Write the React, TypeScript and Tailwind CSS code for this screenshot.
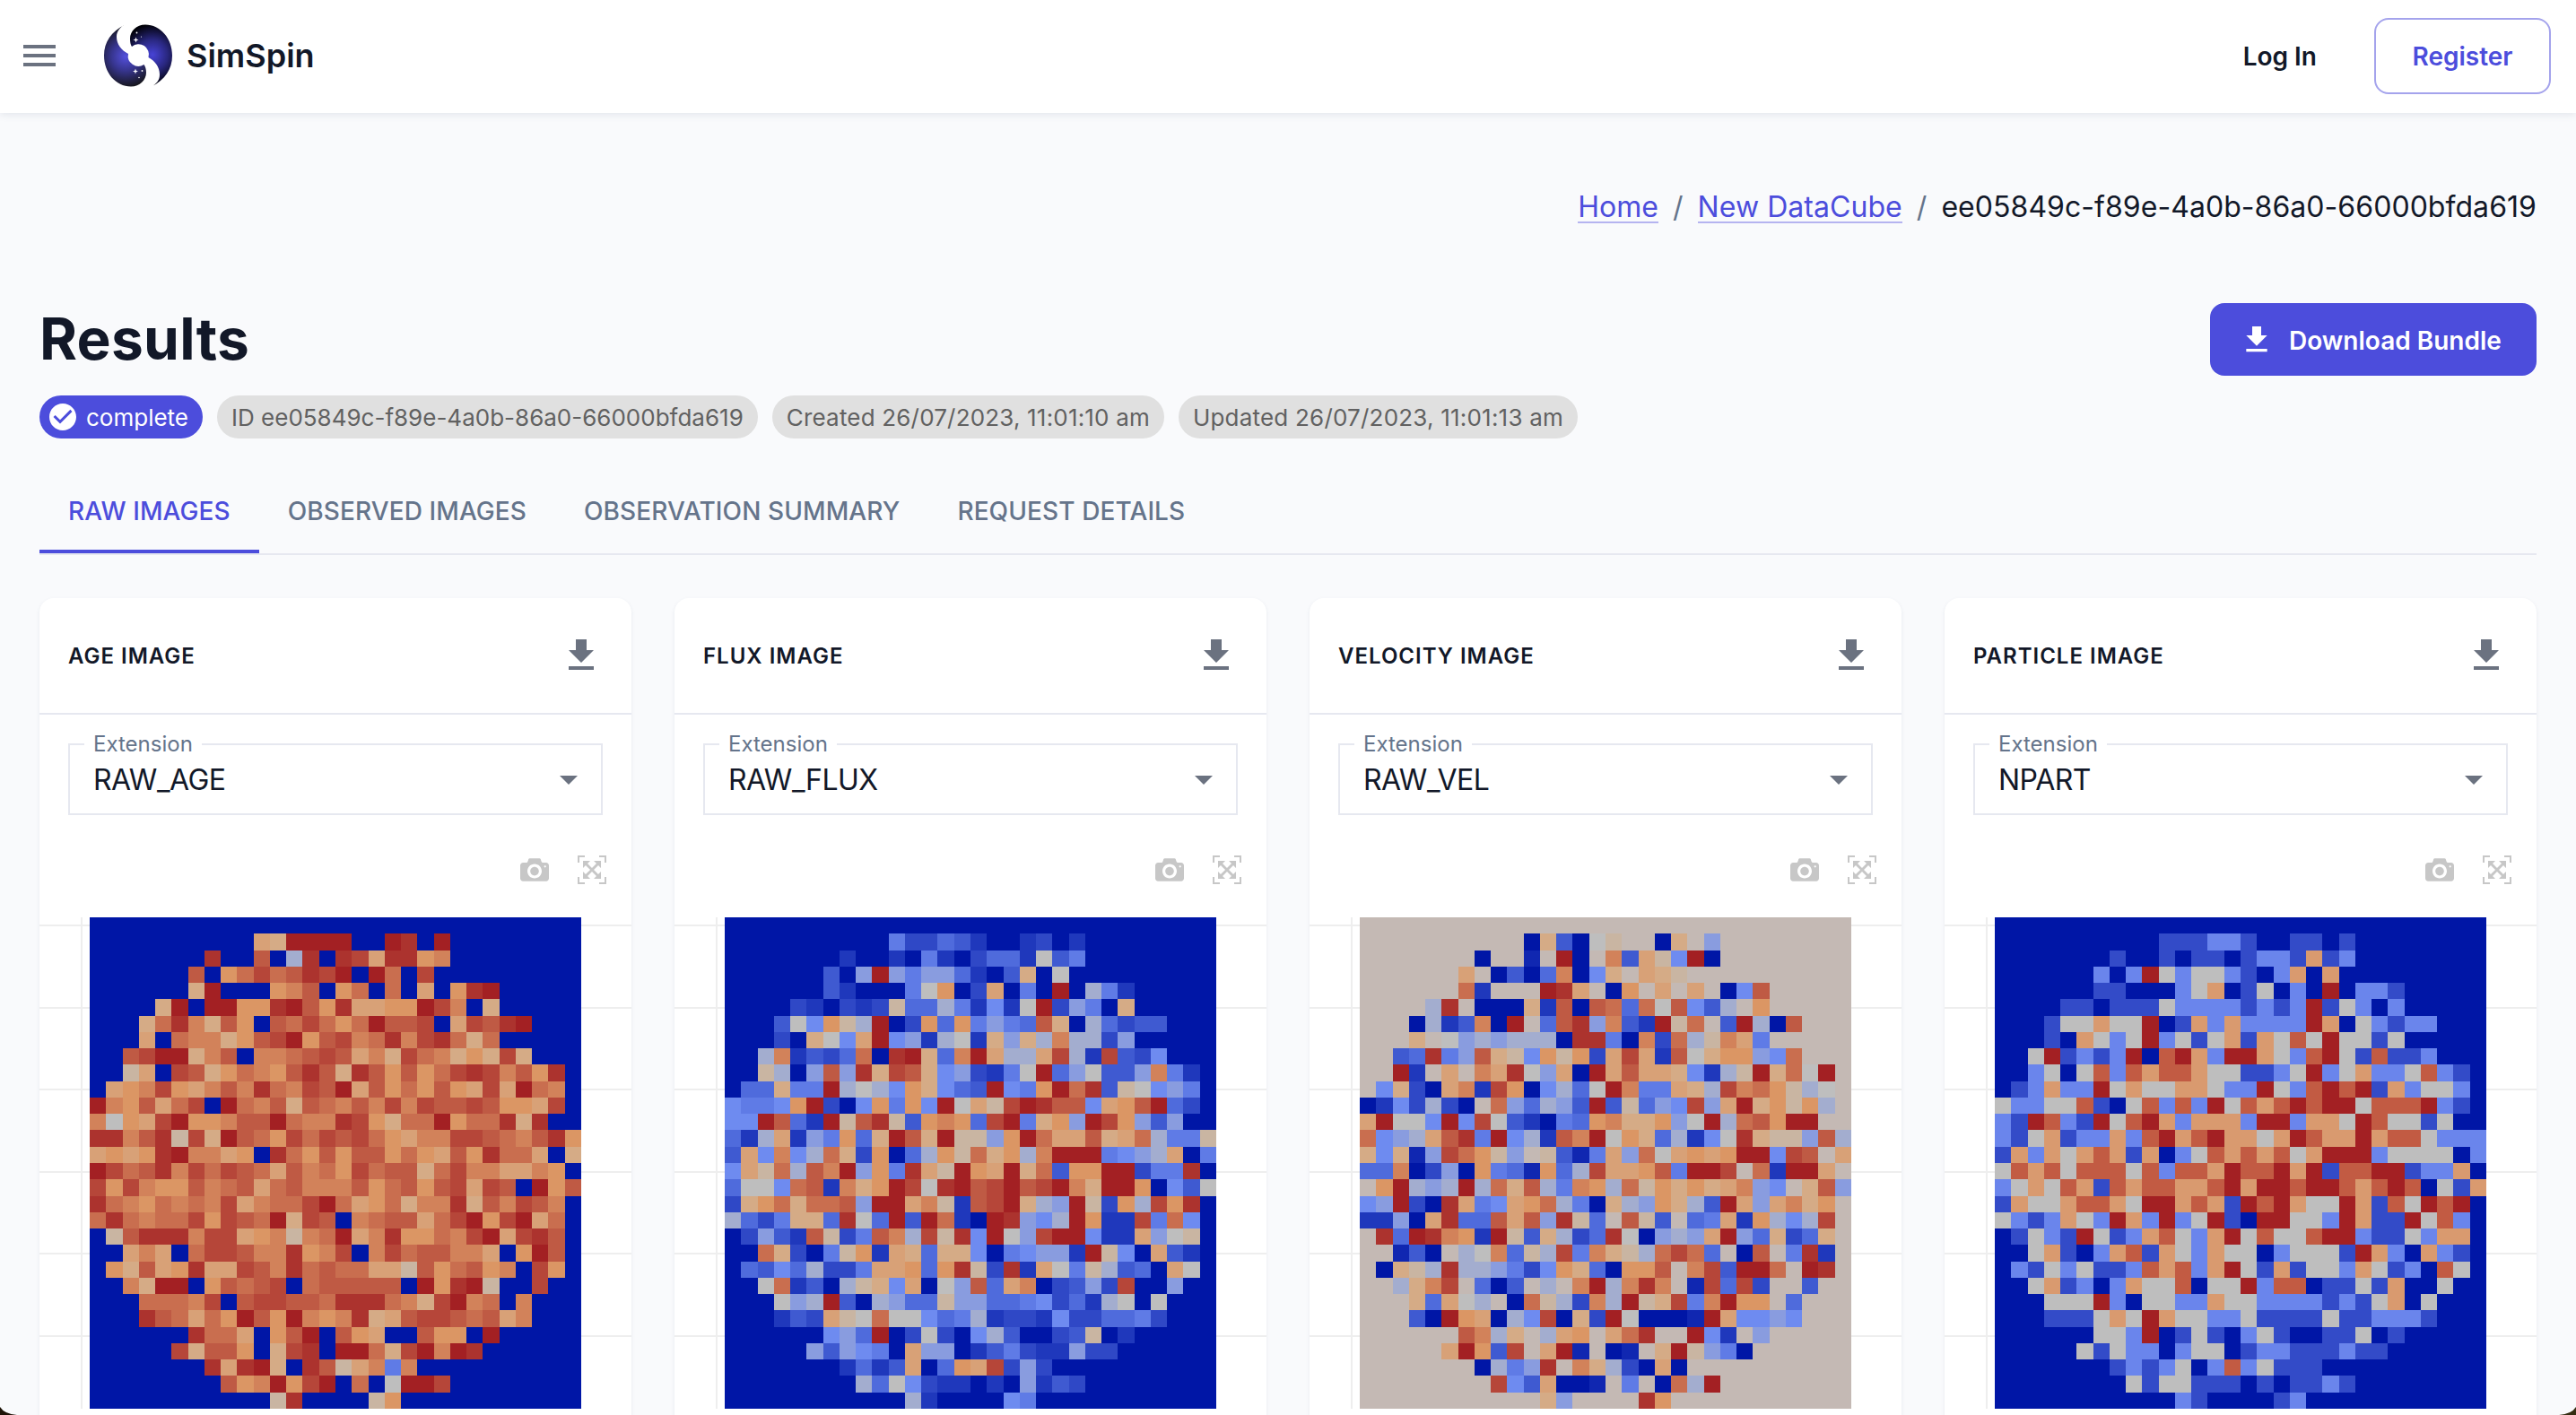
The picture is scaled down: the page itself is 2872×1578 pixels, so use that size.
import React from "react";

const RAMP = [
  "#0016a6", "#1027b1", "#1f38bc", "#2f48c6", "#3f5ad1", "#4f6bdc", "#5f7be6",
  "#6e8bf0", "#899cdf", "#a3adcf", "#bebebe", "#c9b5a2", "#d5ab86", "#d8a177",
  "#db9664", "#d2825a", "#c96e4f", "#bf5a44", "#b64639", "#ac332e", "#a32023",
];
const COUNTS = ["#0016a6", "#334bc8", "#6a85ec", "#bebebe", "#d99a6f", "#c25b43", "#a32023"];

const E = "..............................";
const AGE = [
  E, "..........NMUUUU..UT.U........", ".......T..R.JT.TSNTTOP........", "......R.OQSQRTSU.UQ.S.........",
  "......MU...OPR.OQ.Q.N.OTU.....", "....MU.UUOOTUROTNNOOUSP.M.....", "...MQTPMRO.RQSQOQURRS.NSRTU...",
  "...N.QPPMORSUORSPQTPSTQMQ.....", "..RSUUMPR.PPQRSRNPMSQPMOMSM...", "..LN.SRMOQPORTRMTROROQSTSPROT.",
  ".NOPSONPRPTQPSRUNROQORONSNUQP.", "UPORNQS.UQPRMRQPRPSPSRRSROONS.", "PKONSUOOPRRUQPPTSOMQQUOQQTMT..",
  "TTPRTLSMURQOSQSRSQONPPSSRQPRTO", "NONOTUPPNO.TQORORROQONROTQQN.M", "USQRTPSQSRQNRPQOSQRRMQSPPNNPO.",
  "SOSPOORPQRNQRPPPROQRORSNSR.UOR", "TQPOQPQPSNPQQSUQNOQMPPTMRPSRP.", "QTQPQQSOSRQUMSR.PQRRNQSUOSUNQ.",
  ".LRTTTPSSNOPLPQUNPTOOQPSUNSTR.", "..NPN.QSSRPPTOPS.PSQRRPPN.OUR.", ".OMRNOTNNSRPTQRQQNNLROQROP.SO.",
  "..PMUU.ORQRS.QRRRRR.UOTUL..S..", "...QQQPS.RSSRRQTTTQPMSUPQ.P...", "...TRQNQOUROUPOPTMNRSSRQRNP...",
  "......TQQN.ORU.RON..ROO.U.....", ".....SMRRO.MST.UUQMSUPUT......", ".......TNTUM.TRLNPGP..........",
  "........ROPUOSU.Q.KUUS........", "...........LT....LO...........",
];
const FLUX = [
  E, "..........GDDFEC..CD.C........", ".......C..C.GC.DFFCKEG........", "......E.IUIGIIFC.EM.K.........",
  "......EC...GKO.DN.G.U.JGC.....", "....DC.DCDLFFJGCHCKUDIG.M.....", "...EKHOLJU.DOFOGIGFRM.JFDEE...",
  "...D.MKHNUHICJKCMIMJPJJDI.....", "..JPCEDFQ.TUMFPUNJJNSJCSEDH...", "..LJ.IRITMSRMHIDCGKUFIKEEIPGC.",
  ".FFMGGUJKJHOMHFEUHGOUQTELKHIG.", "HGGHOUD.HOGOHUKNLSUTRRHNORUFD.", "HHURFCULRTLEOPOFSUGMOIUSOIEI..",
  "FCJNCIGOFMURMULLIOUQNNRMNQJGGL", "ENHPHJQMDO.FJOLQMOJPUUUGHIJN.G", "HNLQJRPUIOGTNLUONUMQEOOUUDGGT.",
  "FKKHQRCPMOUSKTURSURSUPMUUO.HEK", "DMOQMQQRIUUNPLCRSUMJIULDOJSOT.", "JFDGMMFTKFUEUQC.UTIHJUOCCSGQH.",
  ".DIECRLDGRPJSLTHUKISUUHCCNIKL.", "..QMD.GLOCNMFMMH.GHIICULH.NEC.", ".FEHFJDDGNNOFOTLDTCNKGLJEF.NK.",
  "..KQCE.JLMHN.KIRFNP.DEIDS..I..", "...KIJUE.JIFFLIIFFGHDFCJK.K...", "...CEDNLKQKKHFGJCDDCHDDFFGD...",
  "......HIFU.DKD.HJE..DEL.C.....", ".....IEIHG.NII.CEGDCCIDD......", ".......CFCEN.FONSDID..........",
  "........JFKHDCC.C.ICED........", "...........JC....HG...........",
];
const VELOCITY = [
  E, "..........AMEAKL..AM.I........", ".......A..B.UA.PENLHUA........", "......N.AEAFPAHM.NML..........",
  "......QC...UTN.AO.N.N.AHR.....", "....JT.AAAMCRARQFQKRHEJ.O.....", "...AJCEPAU.FRTIPECULQ.EUJAR...",
  "...M.KIJIJJJATTGAPDQJLPNG.....", "..EFTGIRMLHOLODNSNCRKMOOIHQ...", "..UC.N.PNTKINAUNRNNMHCJLUMQKU.",
  ".HMDANPCSOAHJFKUPGGNMJSPQOLJK.", "ACHDJDA.QIFJIEUELFIHSINUMOLOJ.", "NUKKHUHSKECAGFOPMMOIKUJQROUU..",
  "QHIJNRTGUHJCRPUKOMFJCHKTMLLIRJ", "MHMBISQOLI.LEBGNIQKNONOUUHSR.N", "FFPADIAOGFBOFJSNNORGUUS.QCUUN.",
  ".OUJIJUJQMRJGPOJQLOMOMNPIH.MRI", "HIUDATNGHNOQJGAMJIOMJEUNINPMO.", "CCIANTFFRNRITLF.RLE.FGNCOJHJS.",
  ".TFUTPOCULEMJDFTKAIJINUIFMDFM.", "..BEA.JKPFLJSGPMLJQSQF.AR.GTC.", ".AMLJTJJIGDHOMFAOOR.PSEUUQ.UT.",
  "..JMPS.FAE.J.PUJPTP.BSFSD..E..", "...MFNKJ.AQLJDPJULMSGPUOO.F...", "...EAUONAJHSAMDUKAAABUNHHIH...",
  "......RPJM.JNO.NQT..UHC.I.....", ".....NUOES.NUB.AB.MULIGA......", ".......AJGIT.PMJDANA..........",
  "........SHENAAB.G.AQJU........", "...........MI....TO...........",
];
const Z = "000000000000000000000000000000";
const PARTICLES = [
  Z, "000000000011122100110100000000", "000000010010110122141200000000", "000000202632332102404000000000",
  "000000110002340130206022100000", "000011011132222121261320200000", "000133433601424222264032122000",
  "000104323623134143536331300000", "003612126056426643256315112000", "002303525455433112362342235210",
  "012422634334432263256561423320", "322335103525263545656635556210", "216521635642444266244365331300",
  "213412242564564434654464553222", "142434541402354545346662333302", "354535553525546556461556612240",
  "234354154554456466566545650314", "143345543664541656433641536560", "321243264262361066332641163520",
  "013216312453246353356621132440", "003410245143243302333164204210", "021323112545246314133243120530",
  "003412024335033625501131400300", "000333620332243322221213403000", "000111343643322311113112221000",
  "000000332601310231001130100000", "000003132202330122111211000000", "000000012123025231110000000000",
  "000000003133111010112100000000", "000000000002100001200000000000",
];

const SIZE = 548;
const edge = (i: number) => Math.round((i * SIZE) / 30);

function cellColor(ch: string) {
  return ch >= "0" && ch <= "9" ? COUNTS[Number(ch)] : RAMP[ch.charCodeAt(0) - 65];
}

function Heatmap({ rows, background }: { rows: string[]; background: string }) {
  return (
    <svg width={SIZE} height={SIZE} viewBox={`0 0 ${SIZE} ${SIZE}`} shapeRendering="crispEdges" className="block">
      <rect width={SIZE} height={SIZE} fill={background} />
      {rows.map((row, y) =>
        [...row].map((ch, x) =>
          ch === "." || ch === "0" ? null : (
            <rect key={`${x}-${y}`} x={edge(x)} y={edge(y)} width={edge(x + 1) - edge(x)} height={edge(y + 1) - edge(y)} fill={cellColor(ch)} />
          ),
        ),
      )}
    </svg>
  );
}

function DownloadIcon({ className }: { className: string }) {
  return (
    <svg viewBox="0 0 24 24" className={className} fill="currentColor">
      <path d="M19 9h-4V3H9v6H5l7 7 7-7zM5 18v2h14v-2H5z" />
    </svg>
  );
}

function Logo() {
  return (
    <svg viewBox="0 0 76 70" className="h-[70px] w-[76px]">
      <defs>
        <radialGradient id="left" gradientUnits="userSpaceOnUse" cx="24" cy="36" r="35">
          <stop offset="0" stopColor="#5450dc" />
          <stop offset="0.45" stopColor="#37358f" />
          <stop offset="1" stopColor="#141417" />
        </radialGradient>
        <radialGradient id="right" gradientUnits="userSpaceOnUse" cx="54" cy="34" r="34">
          <stop offset="0" stopColor="#4743d6" />
          <stop offset="0.5" stopColor="#29277f" />
          <stop offset="1" stopColor="#000006" />
        </radialGradient>
      </defs>
      <path fill="url(#left)" d="M23.500 0.500C8 8 0 20 0 35C0 54 13 69.500 30 69.500C40 69.500 47 62 47 54C47 50 46 47 44.500 45A11.500 11.500 0 0 1 27 33C19 29 14 22 14 14C14 8 18 3 23.500 0.500Z" />
      <path fill="url(#right)" d="M53 69.500C68 62 76 50 76 35C76 16 63 0.500 46 0.500C36 0.500 29 8 29 16C29 20 29.500 23 31 25A11.500 11.500 0 0 1 49.500 37C57 41 62 48 62 56C62 62 59 66 53 69.500Z" />
      <g fill="#fff">
        <path d="M35.500 14.500l.8 2.200 2.200.8-2.200.8-.8 2.200-.8-2.200-2.200-.8 2.200-.8zM35 49.500l.8 2.200 2.200.8-2.200.8-.8 2.200-.8-2.200-2.200-.8 2.200-.8z" />
        <circle cx="36.500" cy="9.500" r="0.900" />
        <circle cx="41.500" cy="14" r="0.600" />
        <circle cx="42.500" cy="52" r="0.900" />
        <circle cx="39" cy="59.500" r="0.800" />
      </g>
    </svg>
  );
}

function CameraIcon() {
  return (
    <svg viewBox="0 0 1000 1000" className="size-8" fill="currentColor">
      <path
        transform="matrix(1 0 0 -1 0 850)"
        d="m500 450c-83 0-150-67-150-150 0-83 67-150 150-150 83 0 150 67 150 150 0 83-67 150-150 150z m400 150h-120c-16 0-34 13-39 29l-31 93c-6 15-23 28-40 28h-340c-16 0-34-13-39-28l-31-94c-6-15-23-28-40-28h-120c-55 0-100-45-100-100v-450c0-55 45-100 100-100h800c55 0 100 45 100 100v450c0 55-45 100-100 100z m-400-550c-138 0-250 112-250 250 0 138 112 250 250 250 138 0 250-112 250-250 0-138-112-250-250-250z m365 380c-19 0-35 16-35 35 0 19 16 35 35 35 19 0 35-16 35-35 0-19-16-35-35-35z"
      />
    </svg>
  );
}

function AutoscaleIcon() {
  return (
    <svg viewBox="0 0 1000 1000" className="size-8" fill="currentColor">
      <path
        transform="matrix(1 0 0 -1 0 850)"
        d="m250 850l-187 0-63 0 0-62 0-188 63 0 0 188 187 0 0 62z m688 0l-188 0 0-62 188 0 0-188 62 0 0 188 0 62-62 0z m-875-938l0 188-63 0 0-188 0-62 63 0 187 0 0 62-187 0z m875 188l0-188-188 0 0-62 188 0 62 0 0 62 0 188-62 0z m-125 188l-1 0-93-94-156 156 156 156 92-93 2 0 0 250-250 0 0-2 93-92-156-156-156 156 94 92 0 2-250 0 0-250 0 0 93 93 157-156-157-156-93 94 0 0 0-250 250 0 0 0-94 93 156 157 156-157-93-93 0 0 250 0 0 250z"
      />
    </svg>
  );
}

const PLOTS = [
  { title: "AGE IMAGE", extension: "RAW_AGE", rows: AGE, background: "#0016a6" },
  { title: "FLUX IMAGE", extension: "RAW_FLUX", rows: FLUX, background: "#0016a6" },
  { title: "VELOCITY IMAGE", extension: "RAW_VEL", rows: VELOCITY, background: "#c4b9b4" },
  { title: "PARTICLE IMAGE", extension: "NPART", rows: PARTICLES, background: "#0016a6" },
];

function PlotCard({ title, extension, rows, background }: (typeof PLOTS)[number]) {
  return (
    <section className="h-[1100px] rounded-2xl bg-white shadow-[0_2px_4px_rgba(100,116,139,0.12)]">
      <header className="flex h-[130px] items-center justify-between border-b-2 border-[#e6e8f0] px-8">
        <h2 className="pt-[2px] text-[24px] leading-none font-semibold tracking-[1px] text-[#121828]">{title}</h2>
        <DownloadIcon className="size-12 text-[#6b7280]" />
      </header>
      <div className="px-8 pt-8">
        <div className="relative flex h-[80px] items-center justify-between border-2 border-[#e6e8f0] pr-[12px] pl-[26px]">
          <span className="absolute -top-[17px] left-[16px] bg-white px-[10px] text-[24px] leading-[32px] text-[#65748b]">Extension</span>
          <span className="pt-px text-[32px] leading-none tracking-[-0.5px] text-[#121828]">{extension}</span>
          <svg viewBox="0 0 24 24" className="size-12 text-[#6b7280]" fill="currentColor">
            <path d="M7 10l5 5 5-5z" />
          </svg>
        </div>
      </div>
      <div className="mt-[45px] flex justify-end gap-8 pr-7 text-[#c7c7c7]">
        <CameraIcon />
        <AutoscaleIcon />
      </div>
      <div className="relative mt-[37px] h-[548px]">
        <div className="flex flex-col gap-[89.500px] pt-2">
          {[0, 1, 2, 3, 4, 5].map((i) => (
            <div key={i} className="h-[2px] bg-[#eeeeee]" />
          ))}
        </div>
        <div className="absolute top-0 left-[46px] h-full w-[2px] bg-[#eeeeee]" />
        <div className="absolute top-0 left-14">
          <Heatmap rows={rows} background={background} />
        </div>
      </div>
    </section>
  );
}

const TABS = ["RAW IMAGES", "OBSERVED IMAGES", "OBSERVATION SUMMARY", "REQUEST DETAILS"];

export default function App() {
  return (
    <div className="relative h-[1578px] w-[2872px] overflow-hidden bg-[#f9fafc] font-[Inter,sans-serif] text-[#121828]">
      <header className="relative flex h-[126px] items-center bg-white pr-[28px] pb-[2px] pl-5 shadow-[0_2px_8px_rgba(100,116,139,0.14)]">
        <svg viewBox="0 0 24 24" className="size-12 text-[#6b7280]" fill="currentColor">
          <path d="M3 18h18v-2H3v2zm0-5h18v-2H3v2zm0-7v2h18V6H3z" />
        </svg>
        <div className="ml-[48px] flex items-center gap-[16px]">
          <Logo />
          <span className="text-[36px] leading-none font-semibold">SimSpin</span>
        </div>
        <span className="mt-[2px] ml-auto text-[28px] leading-none font-semibold">Log In</span>
        <button className="mt-px ml-[64px] h-[85px] w-[197px] rounded-2xl border-2 border-[#a4a3ec] pt-px text-[28px] font-semibold text-[#4c4ddc]">Register</button>
      </header>

      <main className="px-11">
        <nav className="mt-[81px] flex h-12 items-start justify-end gap-4 pt-[7px] text-[32px] leading-[33px] tracking-[0.05px]">
          <a className="border-b-2 border-[#b5b4f0] text-[#4c4ddc]">Home</a>
          <span className="text-[#65748b]">/</span>
          <a className="border-b-2 border-[#b5b4f0] text-[#4c4ddc]">New DataCube</a>
          <span className="text-[#65748b]">/</span>
          <span>ee05849c-f89e-4a0b-86a0-66000bfda619</span>
        </nav>

        <div className="mt-[83px] flex h-[81px] items-center justify-between">
          <h1 className="pb-[2px] text-[64px] leading-none font-bold tracking-[0.3px]">Results</h1>
          <button className="flex h-full w-[364px] items-center rounded-2xl bg-[#4c4ddc] pl-[32px] text-[28px] font-semibold text-white">
            <DownloadIcon className="size-10" />
            <span className="ml-4 pt-[2px]">Download Bundle</span>
          </button>
        </div>

        <div className="mt-[22px] flex gap-4 text-[26px] leading-none">
          <span className="flex h-12 items-center gap-2 rounded-full bg-[#4c4ddc] pr-4 pl-2 text-white">
            <svg viewBox="0 0 24 24" className="size-9" fill="currentColor">
              <path d="M12 2C6.480 2 2 6.480 2 12s4.480 10 10 10 10-4.480 10-10S17.520 2 12 2zm-2 15l-5-5 1.410-1.410L10 14.170l7.590-7.590L19 8l-9 9z" />
            </svg>
            <span className="pt-[2px]">complete</span>
          </span>
          <span className="flex h-12 items-center rounded-full bg-[#e0e0e0] px-4 pt-[2px] text-[#616161]">ID ee05849c-f89e-4a0b-86a0-66000bfda619</span>
          <span className="flex h-12 items-center rounded-full bg-[#e0e0e0] px-4 pt-[2px] tracking-[0.18px] text-[#616161]">Created 26/07/2023, 11:01:10 am</span>
          <span className="flex h-12 items-center rounded-full bg-[#e0e0e0] px-4 pt-[2px] tracking-[0.21px] text-[#616161]">Updated 26/07/2023, 11:01:13 am</span>
        </div>

        <div className="mt-[32px] flex h-[98px] border-b-2 border-[#e6e8f0] text-[28px] font-medium tracking-[0.1px] text-[#65748b]">
          {TABS.map((tab, i) => (
            <div key={tab} className={i === 0 ? "flex items-center border-b-4 border-[#4c4ddc] px-8 pt-[5px] text-[#4c4ddc]" : "flex items-center border-b-4 border-transparent px-8 pt-[5px]"}>
              {tab}
            </div>
          ))}
        </div>

        <div className="mt-12 grid grid-cols-4 gap-12">
          {PLOTS.map((plot) => (
            <PlotCard key={plot.title} {...plot} />
          ))}
        </div>
      </main>

      {/* Rounded window corners */}
      <svg viewBox="0 0 20 9" className="absolute bottom-0 left-0 h-[9px] w-5">
        <path d="M0 0Q5 8 19 9H0Z" fill="#1f1408" />
      </svg>
      <svg viewBox="0 0 20 9" className="absolute right-0 bottom-0 h-[9px] w-5">
        <path d="M20 0Q15 8 1 9H20Z" fill="#352d12" />
      </svg>
    </div>
  );
}
